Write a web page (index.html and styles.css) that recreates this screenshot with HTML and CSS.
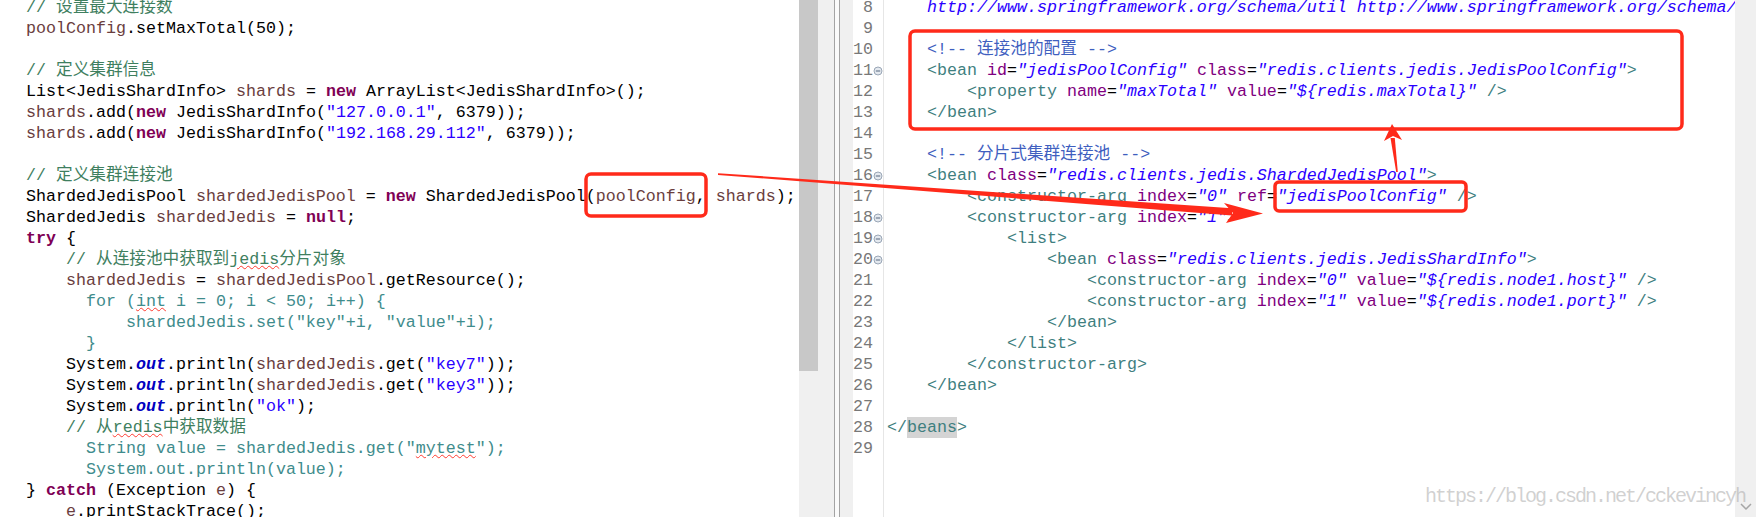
FILE: index.html
```html
<!DOCTYPE html>
<html lang="zh-CN">
<head>
<meta charset="utf-8">
<title>Jedis sharded pool</title>
<link rel="stylesheet" href="styles.css">
</head>
<body>
<div class="screen">
  <section class="java-pane">
    <div class="code java">
      <div class="ln"><span class="cm">// 设置最大连接数</span></div>
      <div class="ln"><span class="lv">poolConfig</span>.setMaxTotal(50);</div>
      <div class="ln"></div>
      <div class="ln"><span class="cm">// 定义集群信息</span></div>
      <div class="ln">List&lt;JedisShardInfo&gt; <span class="lv">shards</span> = <span class="kw">new</span> ArrayList&lt;JedisShardInfo&gt;();</div>
      <div class="ln"><span class="lv">shards</span>.add(<span class="kw">new</span> JedisShardInfo(<span class="str">"127.0.0.1"</span>, 6379));</div>
      <div class="ln"><span class="lv">shards</span>.add(<span class="kw">new</span> JedisShardInfo(<span class="str">"192.168.29.112"</span>, 6379));</div>
      <div class="ln"></div>
      <div class="ln"><span class="cm">// 定义集群连接池</span></div>
      <div class="ln">ShardedJedisPool <span class="lv">shardedJedisPool</span> = <span class="kw">new</span> ShardedJedisPool(<span class="lv">poolConfig</span>, <span class="lv">shards</span>);</div>
      <div class="ln">ShardedJedis <span class="lv">shardedJedis</span> = <span class="kw">null</span>;</div>
      <div class="ln"><span class="kw">try</span> {</div>
      <div class="ln">    <span class="cm">// 从连接池中获取到<span class="sp">jedis</span>分片对象</span></div>
      <div class="ln">    <span class="lv">shardedJedis</span> = <span class="lv">shardedJedisPool</span>.getResource();</div>
      <div class="ln pasted">      for (<span class="sp">int</span> i = 0; i &lt; 50; i++) {</div>
      <div class="ln pasted">          shardedJedis.set("key"+i, "value"+i);</div>
      <div class="ln pasted">      }</div>
      <div class="ln">    System.<span class="fld">out</span>.println(<span class="lv">shardedJedis</span>.get(<span class="str">"key7"</span>));</div>
      <div class="ln">    System.<span class="fld">out</span>.println(<span class="lv">shardedJedis</span>.get(<span class="str">"key3"</span>));</div>
      <div class="ln">    System.<span class="fld">out</span>.println(<span class="str">"ok"</span>);</div>
      <div class="ln">    <span class="cm">// 从<span class="sp">redis</span>中获取数据</span></div>
      <div class="ln pasted">      String value = shardedJedis.get("<span class="sp">mytest</span>");</div>
      <div class="ln pasted">      System.out.println(value);</div>
      <div class="ln">} <span class="kw">catch</span> (Exception <span class="lv">e</span>) {</div>
      <div class="ln">    <span class="lv">e</span>.printStackTrace();</div>
    </div>
  </section>

  <div class="left-scroll"><div class="thumb"></div></div>
  <div class="sash"></div>

  <section class="xml-pane">
    <div class="ruler"></div>
    <div class="linenums">
      <div class="num"><span class="n">8</span><span class="fold"></span></div>
      <div class="num"><span class="n">9</span><span class="fold"></span></div>
      <div class="num"><span class="n">10</span><span class="fold"></span></div>
      <div class="num"><span class="n">11</span><span class="fold"><svg viewBox="0 0 10 10" width="10" height="10"><circle cx="5" cy="5" r="4" class="fc"/><line x1="2.8" y1="5" x2="7.2" y2="5" class="fl"/></svg></span></div>
      <div class="num"><span class="n">12</span><span class="fold"></span></div>
      <div class="num"><span class="n">13</span><span class="fold"></span></div>
      <div class="num"><span class="n">14</span><span class="fold"></span></div>
      <div class="num"><span class="n">15</span><span class="fold"></span></div>
      <div class="num"><span class="n">16</span><span class="fold"><svg viewBox="0 0 10 10" width="10" height="10"><circle cx="5" cy="5" r="4" class="fc"/><line x1="2.8" y1="5" x2="7.2" y2="5" class="fl"/></svg></span></div>
      <div class="num"><span class="n">17</span><span class="fold"></span></div>
      <div class="num"><span class="n">18</span><span class="fold"><svg viewBox="0 0 10 10" width="10" height="10"><circle cx="5" cy="5" r="4" class="fc"/><line x1="2.8" y1="5" x2="7.2" y2="5" class="fl"/></svg></span></div>
      <div class="num"><span class="n">19</span><span class="fold"><svg viewBox="0 0 10 10" width="10" height="10"><circle cx="5" cy="5" r="4" class="fc"/><line x1="2.8" y1="5" x2="7.2" y2="5" class="fl"/></svg></span></div>
      <div class="num"><span class="n">20</span><span class="fold"><svg viewBox="0 0 10 10" width="10" height="10"><circle cx="5" cy="5" r="4" class="fc"/><line x1="2.8" y1="5" x2="7.2" y2="5" class="fl"/></svg></span></div>
      <div class="num"><span class="n">21</span><span class="fold"></span></div>
      <div class="num"><span class="n">22</span><span class="fold"></span></div>
      <div class="num"><span class="n">23</span><span class="fold"></span></div>
      <div class="num"><span class="n">24</span><span class="fold"></span></div>
      <div class="num"><span class="n">25</span><span class="fold"></span></div>
      <div class="num"><span class="n">26</span><span class="fold"></span></div>
      <div class="num"><span class="n">27</span><span class="fold"></span></div>
      <div class="num"><span class="n">28</span><span class="fold"></span></div>
      <div class="num"><span class="n">29</span><span class="fold"></span></div>
    </div>
    <div class="code xml">
      <div class="ln">    <span class="v">http://www.springframework.org/schema/util http://www.springframework.org/schema/util/spring-util-4.0.xsd"</span><span class="t">&gt;</span></div>
      <div class="ln"></div>
      <div class="ln">    <span class="c">&lt;!-- 连接池的配置 --&gt;</span></div>
      <div class="ln">    <span class="t">&lt;bean</span> <span class="a">id</span>=<span class="v">"jedisPoolConfig"</span> <span class="a">class</span>=<span class="v">"redis.clients.jedis.JedisPoolConfig"</span><span class="t">&gt;</span></div>
      <div class="ln">        <span class="t">&lt;property</span> <span class="a">name</span>=<span class="v">"maxTotal"</span> <span class="a">value</span>=<span class="v">"${redis.maxTotal}"</span> <span class="t">/&gt;</span></div>
      <div class="ln">    <span class="t">&lt;/bean&gt;</span></div>
      <div class="ln"></div>
      <div class="ln">    <span class="c">&lt;!-- 分片式集群连接池 --&gt;</span></div>
      <div class="ln">    <span class="t">&lt;bean</span> <span class="a">class</span>=<span class="v">"redis.clients.jedis.ShardedJedisPool"</span><span class="t">&gt;</span></div>
      <div class="ln">        <span class="t">&lt;constructor-arg</span> <span class="a">index</span>=<span class="v">"0"</span> <span class="a">ref</span>=<span class="v">"jedisPoolConfig"</span> <span class="t">/&gt;</span></div>
      <div class="ln">        <span class="t">&lt;constructor-arg</span> <span class="a">index</span>=<span class="v">"1"</span><span class="t">&gt;</span></div>
      <div class="ln">            <span class="t">&lt;list&gt;</span></div>
      <div class="ln">                <span class="t">&lt;bean</span> <span class="a">class</span>=<span class="v">"redis.clients.jedis.JedisShardInfo"</span><span class="t">&gt;</span></div>
      <div class="ln">                    <span class="t">&lt;constructor-arg</span> <span class="a">index</span>=<span class="v">"0"</span> <span class="a">value</span>=<span class="v">"${redis.node1.host}"</span> <span class="t">/&gt;</span></div>
      <div class="ln">                    <span class="t">&lt;constructor-arg</span> <span class="a">index</span>=<span class="v">"1"</span> <span class="a">value</span>=<span class="v">"${redis.node1.port}"</span> <span class="t">/&gt;</span></div>
      <div class="ln">                <span class="t">&lt;/bean&gt;</span></div>
      <div class="ln">            <span class="t">&lt;/list&gt;</span></div>
      <div class="ln">        <span class="t">&lt;/constructor-arg&gt;</span></div>
      <div class="ln">    <span class="t">&lt;/bean&gt;</span></div>
      <div class="ln"></div>
      <div class="ln"><span class="t">&lt;/<span class="hl">beans</span>&gt;</span></div>
      <div class="ln"></div>
    </div>
    <div class="right-scroll">
      <svg class="chev" viewBox="0 0 12 8" width="12" height="8"><polyline points="1,1 6,6 11,1"/></svg>
    </div>
  </section>

  <div class="watermark">https://blog.csdn.net/cckevincyh</div>

  <svg class="annotations" viewBox="0 0 1756 517" width="1756" height="517">
    <rect x="586" y="174" width="120" height="42" rx="5"/>
    <rect x="910" y="31" width="772" height="98" rx="5"/>
    <rect x="1275" y="182" width="191" height="29" rx="4"/>
    <polygon class="fill" points="718,173.2 1232,208.2 1232,215.4 718,174.9"/>
    <polygon class="fill" points="1224,203 1263,213.5 1226,223 1233,213"/>
    <polygon class="fill" points="1396.2,172 1390.5,138 1394.8,138 1397.8,172"/>
    <polygon class="fill" points="1384,141 1392,124 1402,140 1393,136"/>
  </svg>
</div>
</body>
</html>
```

FILE: styles.css
```css
* {
  box-sizing: border-box;
}

html,
body {
  margin: 0;
  padding: 0;
  background: #ffffff;
}

body {
  width: 1756px;
  height: 517px;
  overflow: hidden;
}

.screen {
  position: relative;
  display: flex;
  width: 1756px;
  height: 517px;
  overflow: hidden;
  font-family: "Liberation Mono", "Noto Sans CJK SC", monospace;
  font-size: 16.67px;
  line-height: 21px;
  color: #000000;
}

/* ---------- code blocks ---------- */
.code {
  margin-top: -3px;
}

.ln {
  height: 21px;
  white-space: pre;
}

/* ---------- java pane ---------- */
.java-pane {
  flex: none;
  width: 799px;
  overflow: hidden;
  background: #ffffff;
}

.java {
  padding-left: 26px;
}

.cm {
  color: #3f7f5f;
}

.kw {
  color: #7f0055;
  font-weight: bold;
}

.str {
  color: #2a00ff;
}

.lv {
  color: #6a3e3e;
}

.fld {
  color: #0000c0;
  font-weight: bold;
  font-style: italic;
}

.pasted {
  color: #3f8c8c;
}

.sp {
  text-decoration: underline wavy #ff3b30;
  text-decoration-thickness: 1px;
  text-underline-offset: 1px;
}

/* ---------- separators ---------- */
.left-scroll {
  flex: none;
  width: 35px;
  display: flex;
  background: #f0f0f0;
}

.left-scroll .thumb {
  width: 19px;
  height: 371px;
  background: #c8c8c8;
}

.sash {
  flex: none;
  width: 6px;
  background: #fafafa;
  border-left: 1px solid #a3a3a3;
  border-right: 1px solid #a3a3a3;
}

/* ---------- xml pane ---------- */
.xml-pane {
  flex: 1;
  display: flex;
  min-width: 0;
  background: #ffffff;
}

.ruler {
  flex: none;
  width: 13px;
  background: #f0f0f0;
}

.linenums {
  flex: none;
  width: 31px;
  margin-top: -3px;
  border-right: 1px solid #e6e6e6;
  color: #787878;
}

.num {
  display: flex;
  height: 21px;
}

.num .n {
  width: 20px;
  text-align: right;
}

.num .fold {
  width: 10px;
  display: flex;
  align-items: center;
  justify-content: center;
  padding-top: 1px;
}

.fc {
  fill: #e4e9ef;
  stroke: #9aa6b6;
  stroke-width: 1;
}

.fl {
  stroke: #6e7c90;
  stroke-width: 1.2;
}

.xml {
  flex: 1;
  min-width: 0;
  overflow: hidden;
  padding-left: 3px;
}

.t {
  color: #3f7f7f;
}

.a {
  color: #7f007f;
}

.v {
  color: #2a00ff;
  font-style: italic;
}

.c {
  color: #3f5fbf;
}

.hl {
  display: inline-block;
  height: 21px;
  vertical-align: top;
  background: #d4d4d4;
}

.right-scroll {
  flex: none;
  width: 21px;
  display: flex;
  align-items: flex-end;
  justify-content: center;
  padding-bottom: 6px;
  background: #f0f0f0;
}

.chev polyline {
  fill: none;
  stroke: #a6a6a6;
  stroke-width: 1.5;
}

/* ---------- overlays ---------- */
.watermark {
  position: absolute;
  left: 1425px;
  top: 486px;
  font-family: "Liberation Mono", monospace;
  font-size: 20px;
  letter-spacing: -2px;
  line-height: 22px;
  color: rgba(170, 170, 170, 0.55);
  white-space: nowrap;
}

.annotations {
  position: absolute;
  left: 0;
  top: 0;
  pointer-events: none;
}

.annotations rect {
  fill: none;
  stroke: #ff2a1a;
  stroke-width: 3.5;
}

.annotations .fill {
  fill: #ff2a1a;
  stroke: none;
}
```
